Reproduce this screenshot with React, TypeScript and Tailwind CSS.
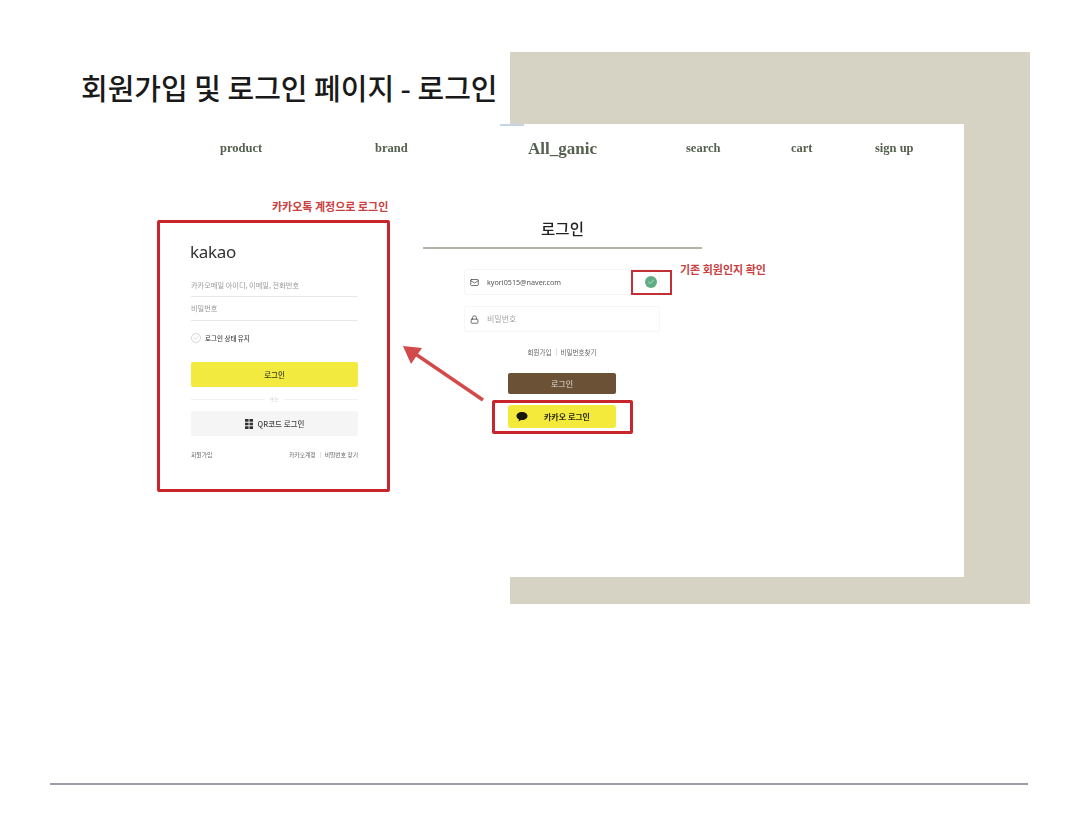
import { Check, Lock, Mail } from "lucide-react";

const KR = "font-['Noto_Sans_CJK_KR','Noto_Sans',sans-serif]";
const SERIF = "font-['Liberation_Serif',serif]";

const QrIcon = () => (
  <svg width="8" height="10" viewBox="0 0 9 11" fill="#333">
    <path d="M0 0h4v3H0zM5 0h4v3H5zM0 4h4v3H0zM5 4h4v3H5zM0 8h4v3H0zM5 8h4v3H5z" />
  </svg>
);

const KakaoLogin = () => {
  return (
    <div className="absolute left-[157px] top-[220px] w-[233px] h-[272px] border-[3px] border-[#c9252d] rounded-[2px] bg-white">
      <div className="pl-[31px] pr-[29px] pt-[17px] blur-[0.35px]">
        <div className="font-['Noto_Sans',sans-serif] text-[17px] leading-[24px] tracking-[-0.3px] -ml-[1px] text-[#333] h-[24px]">
          kakao
        </div>
        <div className="mt-[14px] h-[19px] border-b border-[#e8e8e8] text-[7.2px] leading-[14px] text-[#9a9a9a]">
          카카오메일 아이디, 이메일, 전화번호
        </div>
        <div className="mt-[5px] h-[19px] border-b border-[#e8e8e8] text-[7.2px] leading-[12px] text-[#9a9a9a]">
          비밀번호
        </div>
        <div className="mt-[12px] flex items-center gap-[4px] h-[10px]">
          <span className="w-[10px] h-[10px] rounded-full border border-[#d4d4d4] flex items-center justify-center">
            <Check size={6} color="#b5b5b5" />
          </span>
          <span className="text-[6.5px] leading-[10px] font-medium text-[#444]">로그인 상태 유지</span>
        </div>
        <div className="mt-[19px] h-[25px] rounded-[2px] bg-[#f3ea3f] flex items-center justify-center text-[7.5px] font-medium text-[#3a3a1a]">
          로그인
        </div>
        <div className="mt-[7px] h-[10px] flex items-center gap-[5px] text-[5px] text-[#c4c4c4]">
          <span className="flex-1 border-t border-[#f0f0f0]" />
          또는
          <span className="flex-1 border-t border-[#f0f0f0]" />
        </div>
        <div className="mt-[7px] h-[25px] rounded-[2px] bg-[#f5f5f5] flex items-center justify-center gap-[5px] text-[7.5px] font-medium text-[#444]">
          <QrIcon />
          QR코드 로그인
        </div>
        <div className="mt-[14px] flex items-center justify-between text-[5.8px] leading-[10px] text-[#666]">
          <span>회원가입</span>
          <span className="flex items-center gap-[4px]">
            카카오계정
            <span className="h-[6px] border-l border-[#e5e5e5]" />
            비밀번호 찾기
          </span>
        </div>
      </div>
    </div>
  );
};

const navItems = [
  { label: "product", w: "w-[155px]", cls: "text-[12.5px]" },
  { label: "brand", w: "w-[153px]", cls: "text-[12.5px]" },
  { label: "All_ganic", w: "w-[158px]", cls: "text-[17px]" },
  { label: "search", w: "w-[105px]", cls: "text-[12.5px]" },
  { label: "cart", w: "w-[84px]", cls: "text-[12.5px]" },
  { label: "sign up", w: "", cls: "text-[12.5px]" },
];

const LoginPage = () => {
  return (
    <div className="absolute left-[200px] top-[124px] w-[764px] h-[453px] bg-white">
      <div className="blur-[0.35px]">
        {/* nav */}
        <div className={`${SERIF} h-[49px] flex items-center pl-[20px] font-bold text-[#56604f]`}>
          {navItems.map((item, i) => (
            <div key={i} className={`${item.w} ${item.cls} whitespace-nowrap`}>
              {item.label}
            </div>
          ))}
        </div>

        {/* title */}
        <div className="ml-[223px] w-[279px] mt-[42px] h-[34px] border-b-2 border-[#b0b5a8] text-center text-[15.5px] leading-[27px] font-medium text-[#222]">
          로그인
        </div>

        {/* form */}
        <div className="ml-[264px] w-[196px] mt-[20px]">
          <div className="h-[26px] border border-[#f6f6f6] rounded-[2px] flex items-center pl-[5px] text-[7.2px] text-[#555]">
            <Mail size={9} color="#444" />
            <span className="ml-[8px] font-['Noto_Sans',sans-serif]">kyori0515@naver.com</span>
            <span className="ml-auto mr-[2px] w-[12px] h-[12px] rounded-full bg-[#5fae83] flex items-center justify-center">
              <Check size={8} color="#d9f0e4" />
            </span>
          </div>
          <div className="mt-[11px] h-[26px] border border-[#f6f6f6] rounded-[2px] flex items-center pl-[5px] text-[8px] text-[#a5a5a5]">
            <Lock size={9} color="#444" />
            <span className="ml-[8px]">비밀번호</span>
          </div>
          <div className="mt-[14px] flex items-center justify-center gap-[4px] text-[6.5px] leading-[12px] text-[#666]">
            회원가입
            <span className="h-[8px] border-l border-[#e0e0e0]" />
            비밀번호찾기
          </div>
          <div className="ml-[44px] mt-[15px] w-[108px] h-[21px] rounded-[2px] bg-[#6b5237] flex items-center justify-center text-[8px] text-[#e4dcd2]">
            로그인
          </div>
          <div className="ml-[44px] mt-[11px] w-[108px] h-[23px] rounded-[3px] bg-[#f3ea3c] flex items-center pl-[8px] text-[8px] font-bold text-[#2b2a10]">
            <svg width="12" height="10" viewBox="0 0 12 10" fill="#17170f">
              <path d="M6 0C2.7 0 .5 1.7.5 4c0 1.5 1 2.7 2.5 3.4L2.6 9.6 5 7.9c.3 0 .7.1 1 .1 3.3 0 5.5-1.8 5.5-4S9.3 0 6 0z" />
            </svg>
            <span className="ml-[16px]">카카오 로그인</span>
          </div>
        </div>
      </div>
    </div>
  );
};

export default function App() {
  return (
    <div className={`${KR} relative w-[1084px] h-[836px] bg-white overflow-hidden`}>
      {/* slide background block */}
      <div className="absolute left-[510px] top-[52px] w-[520px] h-[552px] bg-[#d6d3c4]" />
      <LoginPage />
      <div className="absolute left-[500px] top-[124px] w-[24px] h-[2px] bg-[#c5d3e3]" />

      <h1 className="absolute left-[81px] top-[65px] text-[29px] leading-[44px] font-medium text-[#1a1a1a] whitespace-nowrap">
        회원가입 및 로그인 페이지 - 로그인
      </h1>

      <div className="absolute left-[272px] top-[198px] text-[11px] leading-[16px] font-bold text-[#c8403f] whitespace-nowrap">
        카카오톡 계정으로 로그인
      </div>
      <KakaoLogin />

      {/* annotations */}
      <div className="absolute left-[680px] top-[261px] text-[11px] leading-[16px] font-bold text-[#c8403f] whitespace-nowrap">
        기존 회원인지 확인
      </div>
      <div className="absolute left-[631px] top-[270px] w-[41px] h-[25px] border-2 border-[#c22f36]" />
      <div className="absolute left-[492px] top-[400px] w-[141px] h-[34px] border-[3px] border-[#c9252d] rounded-[2px]" />
      <svg className="absolute left-[400px] top-[340px]" width="90" height="66" viewBox="0 0 90 66">
        <path d="M83 60 L14 13" stroke="#d24b4b" strokeWidth="3.5" />
        <path d="M3 6 L22 8 L11 24 Z" fill="#d24b4b" />
      </svg>

      {/* footer rule */}
      <div className="absolute left-[50px] top-[783px] w-[978px] h-[2px] bg-[#9a9da8]" />
    </div>
  );
}
